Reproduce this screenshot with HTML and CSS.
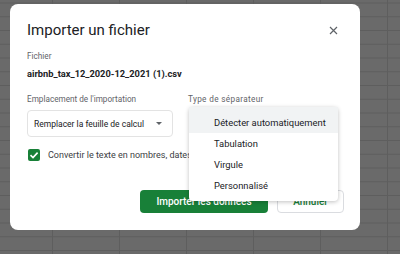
FILE: index.html
```html
<!DOCTYPE html>
<html lang="fr">
<head>
  <meta charset="UTF-8">
  <title>Importer un fichier</title>
  <link rel="stylesheet" href="styles.css">
</head>
<body>
  <div class="dialog">
    <div class="dialog-head">
      <h2>Importer un fichier</h2>
      <span class="close">
        <svg width="9" height="9" viewBox="0 0 9 9"><path d="M1 1 L8 8 M8 1 L1 8" stroke="#5f6368" stroke-width="1.2"/></svg>
      </span>
    </div>

    <div class="label">Fichier</div>
    <div class="file-name">airbnb_tax_12_2020-12_2021 (1).csv</div>

    <div class="options">
      <div class="col">
        <div class="label">Emplacement de l'importation</div>
        <div class="select">
          <span>Remplacer la feuille de calcul</span>
          <span class="caret"></span>
        </div>
      </div>
      <div class="col">
        <div class="label wide">Type de séparateur</div>
      </div>
    </div>

    <div class="check-row">
      <span class="checkbox">
        <svg width="10" height="10" viewBox="0 0 10 10"><path d="M1.5 5.2 L4 7.6 L8.6 2.6" fill="none" stroke="#fff" stroke-width="1.6"/></svg>
      </span>
      <span class="check-text">Convertir le texte en nombres, dates et formules</span>
    </div>

    <div class="actions">
      <button class="btn-primary">Importer les données</button>
      <button class="btn-outline">Annuler</button>
    </div>

    <!-- open separator menu -->
    <ul class="menu">
      <li class="active">Détecter automatiquement</li>
      <li>Tabulation</li>
      <li>Virgule</li>
      <li>Personnalisé</li>
    </ul>
  </div>
</body>
</html>
```

FILE: styles.css
```css
body {
  margin: 0;
  width: 400px;
  height: 254px;
  overflow: hidden;
  font-family: Roboto, "Liberation Sans", Arial, sans-serif;
  background-color: #6a6a6a;
  background-image:
    linear-gradient(to right, #5e5e5e 1px, transparent 1px),
    linear-gradient(to bottom, #5e5e5e 1px, transparent 1px);
  background-size: 67px 13.75px;
  background-position: 52px 2.5px;
}
.dialog {
  position: relative;
  box-sizing: border-box;
  width: 350px;
  height: 226px;
  margin: 4px 0 0 10px;
  padding: 16px 16px 0 17px;
  background: #fff;
  border-radius: 8px;
  color: #202124;
}
.dialog-head {
  display: flex;
  justify-content: space-between;
  align-items: center;
  height: 20px;
}
h2 {
  margin: 0;
  font-size: 15px;
  font-weight: 400;
  line-height: 20px;
}
.close {
  display: flex;
  margin-right: 6px;
}
.label {
  margin-top: 10px;
  font-size: 8.2px;
  line-height: 12px;
  color: #5f6368;
}
.label.wide {
  letter-spacing: 0.35px;
}
.file-name {
  margin-top: 5px;
  font-size: 9.3px;
  font-weight: 700;
  line-height: 13px;
}
.options {
  display: grid;
  grid-template-columns: 161px 1fr;
  margin-top: 3px;
}
.select {
  box-sizing: border-box;
  display: flex;
  align-items: center;
  justify-content: space-between;
  width: 146px;
  height: 27px;
  margin-top: 5px;
  padding: 0 10px 0 6px;
  border: 1px solid #e3e3e3;
  border-radius: 4px;
  font-size: 8.5px;
  white-space: nowrap;
}
.caret {
  border-left: 3px solid transparent;
  border-right: 3px solid transparent;
  border-top: 3px solid #5f6368;
}
.check-row {
  display: flex;
  align-items: center;
  height: 12px;
  margin-top: 12px;
  padding-left: 1px;
}
.checkbox {
  display: flex;
  align-items: center;
  justify-content: center;
  width: 12px;
  height: 12px;
  border-radius: 2px;
  background: #188038;
}
.check-text {
  margin-left: 8px;
  font-size: 9px;
  color: #3c4043;
  white-space: nowrap;
}
.actions {
  display: flex;
  justify-content: flex-end;
  gap: 9px;
  margin-top: 29px;
}
.actions button {
  box-sizing: border-box;
  height: 23px;
  border-radius: 4px;
  font-family: inherit;
  font-size: 10px;
  font-weight: 500;
  cursor: pointer;
}
.btn-primary {
  width: 128px;
  border: none;
  background: #188038;
  color: #fff;
}
.btn-outline {
  width: 67px;
  border: 1px solid #dadce0;
  background: #fff;
  color: #188038;
}
.menu {
  position: absolute;
  left: 179px;
  top: 103px;
  width: 149px;
  margin: 0;
  padding: 0 0 5px;
  list-style: none;
  background: #fff;
  border-radius: 4px;
  box-shadow: 0 1px 4px rgba(0,0,0,0.25);
  font-size: 9.4px;
  color: #202124;
}
.menu li {
  height: 21px;
  line-height: 21px;
  padding-left: 25px;
}
.menu li.active {
  height: 20px;
  padding-top: 6px;
  line-height: 20px;
  background: #f1f3f4;
}
```
